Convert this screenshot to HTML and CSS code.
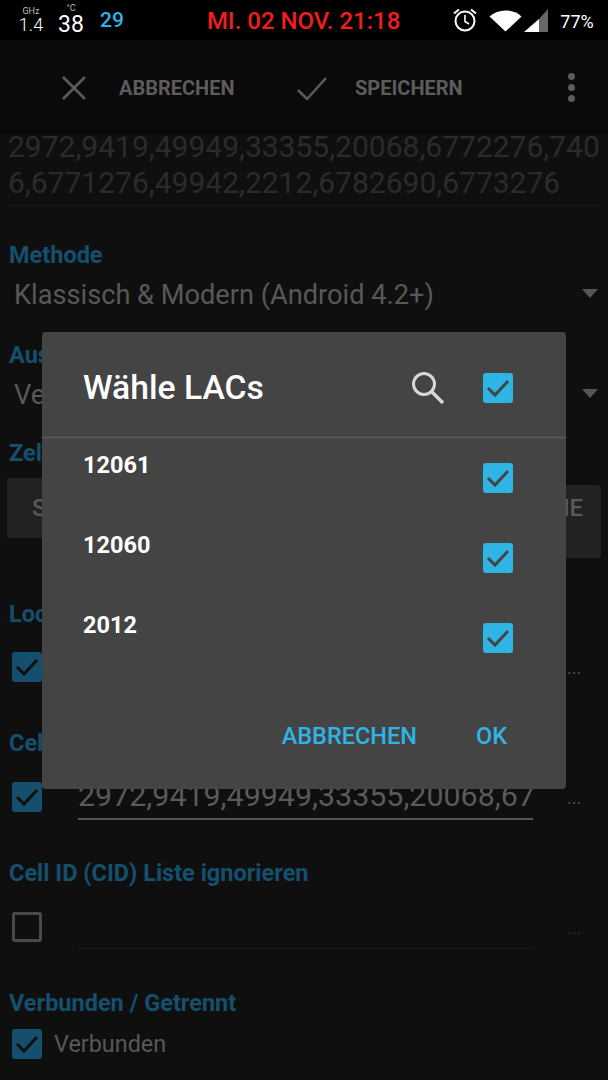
FILE: index.html
```html
<!DOCTYPE html>
<html lang="de">
<head>
<meta charset="utf-8">
<title>Wähle LACs</title>
<link rel="stylesheet" href="styles.css">
</head>
<body>

<div class="statusbar">
  <div class="cpu"><small>GHz</small><span>1.4</span></div>
  <div class="temp"><small>°C</small><span>38</span></div>
  <div class="count">29</div>
  <div class="clock">MI. 02 NOV. 21:18</div>
  <svg class="alarm" width="26" height="26" viewBox="0 0 26 26">
    <circle cx="13" cy="14" r="9.5" fill="none" stroke="#fff" stroke-width="2"/>
    <path d="M13 8v6.5l4 2.5" fill="none" stroke="#fff" stroke-width="1.6"/>
    <path d="M2 6.5L7 2.5M24 6.5L19 2.5" stroke="#fff" stroke-width="2.2"/>
  </svg>
  <svg class="wifi" width="33" height="24" viewBox="0 0 33 24">
    <path d="M0.5 8.5C9 0.5 24 0.5 32.500 8.500L16.500 23.500Z" fill="#fff"/>
  </svg>
  <svg class="signal" width="25" height="25" viewBox="0 0 25 25">
    <path d="M0 24L15 11V24Z" fill="#fff"/>
    <path d="M15 11L24 1V24H15Z" fill="#666"/>
  </svg>
  <div class="battery">77%</div>
</div>

<div class="toolbar">
  <svg class="tool-x" width="24" height="24" viewBox="0 0 24 24">
    <path d="M1 1L23 23M23 1L1 23" stroke="#5a5a5a" stroke-width="2.6"/>
  </svg>
  <span class="tool-text cancel">ABBRECHEN</span>
  <svg class="tool-check" width="30" height="24" viewBox="0 0 30 24">
    <path d="M1 14L10 23L29 2" fill="none" stroke="#5a5a5a" stroke-width="2.6"/>
  </svg>
  <span class="tool-text save">SPEICHERN</span>
  <div class="dots"><i></i><i></i><i></i></div>
</div>

<div class="content">
  <div class="idlist">2972,9419,49949,33355,20068,6772276,740 6,6771276,49942,2212,6782690,6773276</div>

  <div class="label first">Methode</div>
  <div class="select"><span>Klassisch &amp; Modern (Android 4.2+)</span><b></b></div>

  <div class="label">Ausgabe</div>
  <div class="select"><span>Verbunden</span><b></b></div>

  <div class="label zel">Zellen</div>
  <div class="buttons">
    <div class="btn left">SUCHE</div>
    <div class="btn right">SUCHE</div>
  </div>

  <div class="label loc">Location Area Code</div>
  <div class="row">
    <div class="check on"><svg width="30" height="30" viewBox="0 0 30 30"><path d="M5 15L12 22L25 8" fill="none" stroke="#0f0f0f" stroke-width="3"/></svg></div>
    <div class="field"></div>
    <div class="more">...</div>
  </div>

  <div class="label cel">Cell ID (CID) Liste</div>
  <div class="row">
    <div class="check on"><svg width="30" height="30" viewBox="0 0 30 30"><path d="M5 15L12 22L25 8" fill="none" stroke="#0f0f0f" stroke-width="3"/></svg></div>
    <div class="field lit">2972,9419,49949,33355,20068,6772276,7406</div>
    <div class="more">...</div>
  </div>

  <div class="label cid">Cell ID (CID) Liste ignorieren</div>
  <div class="row">
    <div class="check"></div>
    <div class="field"></div>
    <div class="more dim">...</div>
  </div>

  <div class="label ver">Verbunden / Getrennt</div>
  <div class="row">
    <div class="check on"><svg width="30" height="30" viewBox="0 0 30 30"><path d="M5 15L12 22L25 8" fill="none" stroke="#0f0f0f" stroke-width="3"/></svg></div>
    <span class="check-text">Verbunden</span>
  </div>
</div>

<div class="dialog">
  <div class="dialog-head">
    <h2>Wähle LACs</h2>
    <svg class="search" width="34" height="34" viewBox="0 0 34 34">
      <circle cx="13" cy="13" r="10.500" fill="none" stroke="#d8d8d8" stroke-width="3"/>
      <path d="M21 21L32 32" stroke="#d8d8d8" stroke-width="3.400"/>
    </svg>
    <div class="check blue"><svg width="30" height="30" viewBox="0 0 30 30"><path d="M5 15L12 22L25 8" fill="none" stroke="#444" stroke-width="3"/></svg></div>
  </div>
  <div class="lac">
    <span>12061</span>
    <div class="check blue"><svg width="30" height="30" viewBox="0 0 30 30"><path d="M5 15L12 22L25 8" fill="none" stroke="#444" stroke-width="3"/></svg></div>
  </div>
  <div class="lac">
    <span>12060</span>
    <div class="check blue"><svg width="30" height="30" viewBox="0 0 30 30"><path d="M5 15L12 22L25 8" fill="none" stroke="#444" stroke-width="3"/></svg></div>
  </div>
  <div class="lac">
    <span>2012</span>
    <div class="check blue"><svg width="30" height="30" viewBox="0 0 30 30"><path d="M5 15L12 22L25 8" fill="none" stroke="#444" stroke-width="3"/></svg></div>
  </div>
  <div class="dialog-actions">
    <span>ABBRECHEN</span>
    <span>OK</span>
  </div>
</div>

</body>
</html>
```

FILE: styles.css
```css
html, body {
  margin: 0;
  padding: 0;
}

body {
  width: 608px;
  height: 1080px;
  overflow: hidden;
  position: relative;
  background-color: #0f0f0f;
  font-family: Roboto, "Liberation Sans", sans-serif;
}

/* Status bar */
.statusbar {
  height: 40px;
  background-color: #000;
  display: flex;
  align-items: center;
  color: #fff;
}

.cpu, .temp {
  display: flex;
  flex-direction: column;
  align-items: center;
  line-height: 1;
}

.cpu {
  width: 20px;
  margin-left: 21px;
  font-size: 18px;
  font-weight: 300;
}

.temp {
  width: 28px;
  margin-left: 16px;
  font-size: 23px;
}

.cpu small, .temp small {
  font-size: 9px;
  font-weight: 400;
  color: #bbb;
}

.count {
  margin-left: 15px;
  color: #2fb4e6;
  font-size: 21px;
  font-weight: 500;
}

.clock {
  margin-left: 83px;
  margin-top: 2px;
  color: #f21d1d;
  font-size: 24px;
  font-weight: 500;
  white-space: nowrap;
}

.alarm {
  margin-left: 52px;
}

.wifi {
  margin-left: 11px;
}

.signal {
  margin-left: 2px;
}

.battery {
  margin-left: 11px;
  margin-top: 2px;
  font-size: 18px;
}

/* Toolbar */
.toolbar {
  height: 95px;
  background-color: #0a0a0a;
  display: flex;
  align-items: center;
  position: relative;
}

.tool-x {
  margin-left: 62px;
}

.tool-text {
  color: #5c5c5c;
  font-size: 20px;
  font-weight: 700;
}

.tool-text.cancel {
  width: 116px;
  margin-left: 33px;
}

.tool-text.save {
  margin-left: 28px;
}

.tool-check {
  margin-left: 62px;
}

.dots {
  margin-left: auto;
  margin-right: 33px;
  display: flex;
  flex-direction: column;
  gap: 4px;
}

.dots i {
  display: block;
  width: 7px;
  height: 7px;
  border-radius: 50%;
  background-color: #5c5c5c;
}

/* Form behind the dialog */
.content {
  padding: 0 7px;
  color: #5a5a5a;
}

.idlist {
  font-size: 30px;
  line-height: 36px;
  color: #2b2b2b;
  margin-top: -6px;
  margin-left: 1px;
  padding-bottom: 4px;
  border-bottom: 1px solid #1a1a1a;
  word-break: break-all;
}

.label {
  color: #14506e;
  font-size: 23.5px;
  font-weight: 700;
  line-height: 30px;
  margin-left: 2px;
  white-space: nowrap;
}

.label.first { margin-top: 34px; }
.label.zel { margin-top: -2px; }
.label.loc { margin: 41px 0 12px 2px; }
.label.cel { margin: 35px 0 13px 2px; }
.label.cid { margin: 35px 0 13px 2px; }
.label.ver { margin: 35px 0 0 2px; }

.select {
  height: 48px;
  display: flex;
  align-items: center;
  justify-content: space-between;
  margin: 1px 0 21px 7px;
  font-size: 27.2px;
  color: #585858;
}

.select b {
  width: 0;
  height: 0;
  margin: 0 3px 4px 0;
  border-left: 8px solid transparent;
  border-right: 8px solid transparent;
  border-top: 9px solid #555;
}

.buttons {
  display: flex;
  justify-content: space-between;
  align-items: flex-start;
  margin-top: 10px;
}

.btn {
  height: 60px;
  width: 300px;
  box-sizing: border-box;
  border-radius: 3px;
  background-color: #222;
  color: #5a5a5a;
  font-size: 24px;
  font-weight: 500;
  line-height: 60px;
  padding: 0 18px 0 25px;
}

.btn.right {
  width: 280px;
  height: 73px;
  margin-top: 7px;
  line-height: 46px;
  text-align: right;
}

.row {
  display: flex;
  align-items: center;
  height: 52px;
}

.check {
  width: 30px;
  height: 30px;
  flex: none;
  margin-left: 5px;
  box-sizing: border-box;
  border: 3px solid #4a4a4a;
  border-radius: 3px;
}

.check svg {
  display: block;
  margin: -3px;
}

.check.on {
  background-color: #14506e;
  border-color: #14506e;
}

.check.blue {
  background-color: #2fb4e6;
  border-color: #2fb4e6;
  margin-left: 0;
}

.check-text {
  margin-left: 12px;
  font-size: 23.4px;
  color: #585858;
}

.field {
  flex: none;
  align-self: flex-start;
  width: 455px;
  height: 40px;
  margin: 7px 0 0 36px;
  border-bottom: 1px solid #1c1c1c;
  overflow: hidden;
  white-space: nowrap;
  font-size: 30.4px;
  line-height: 36px;
}

.field.lit {
  border-bottom: 2px solid #555;
}

.more {
  margin-left: 34px;
  font-size: 18px;
  color: #4d4d4d;
}

.more.dim {
  color: #2a2a2a;
}

/* Dialog over the form */
.dialog {
  position: absolute;
  left: 42px;
  top: 332px;
  width: 524px;
  height: 457px;
  border-radius: 4px;
  background-color: #444;
  color: #fff;
}

.dialog-head {
  height: 106px;
  box-sizing: border-box;
  display: flex;
  align-items: center;
  padding: 6px 53px 0 41px;
  border-bottom: 1px solid #5e5e5e;
}

.dialog-head h2 {
  margin: 0;
  flex: 1;
  font-size: 33.7px;
  font-weight: 500;
}

.search {
  margin-right: 38px;
}

.lac {
  height: 80px;
  display: flex;
  justify-content: space-between;
  padding: 0 53px 0 41px;
  font-size: 23.5px;
  font-weight: 700;
  line-height: 55px;
}

.lac .check {
  margin-top: 25px;
}

.dialog-actions {
  display: flex;
  justify-content: flex-end;
  gap: 59px;
  margin-top: 44px;
  padding-right: 59px;
  color: #2fb4e6;
  font-size: 23.5px;
  font-weight: 500;
}
```
